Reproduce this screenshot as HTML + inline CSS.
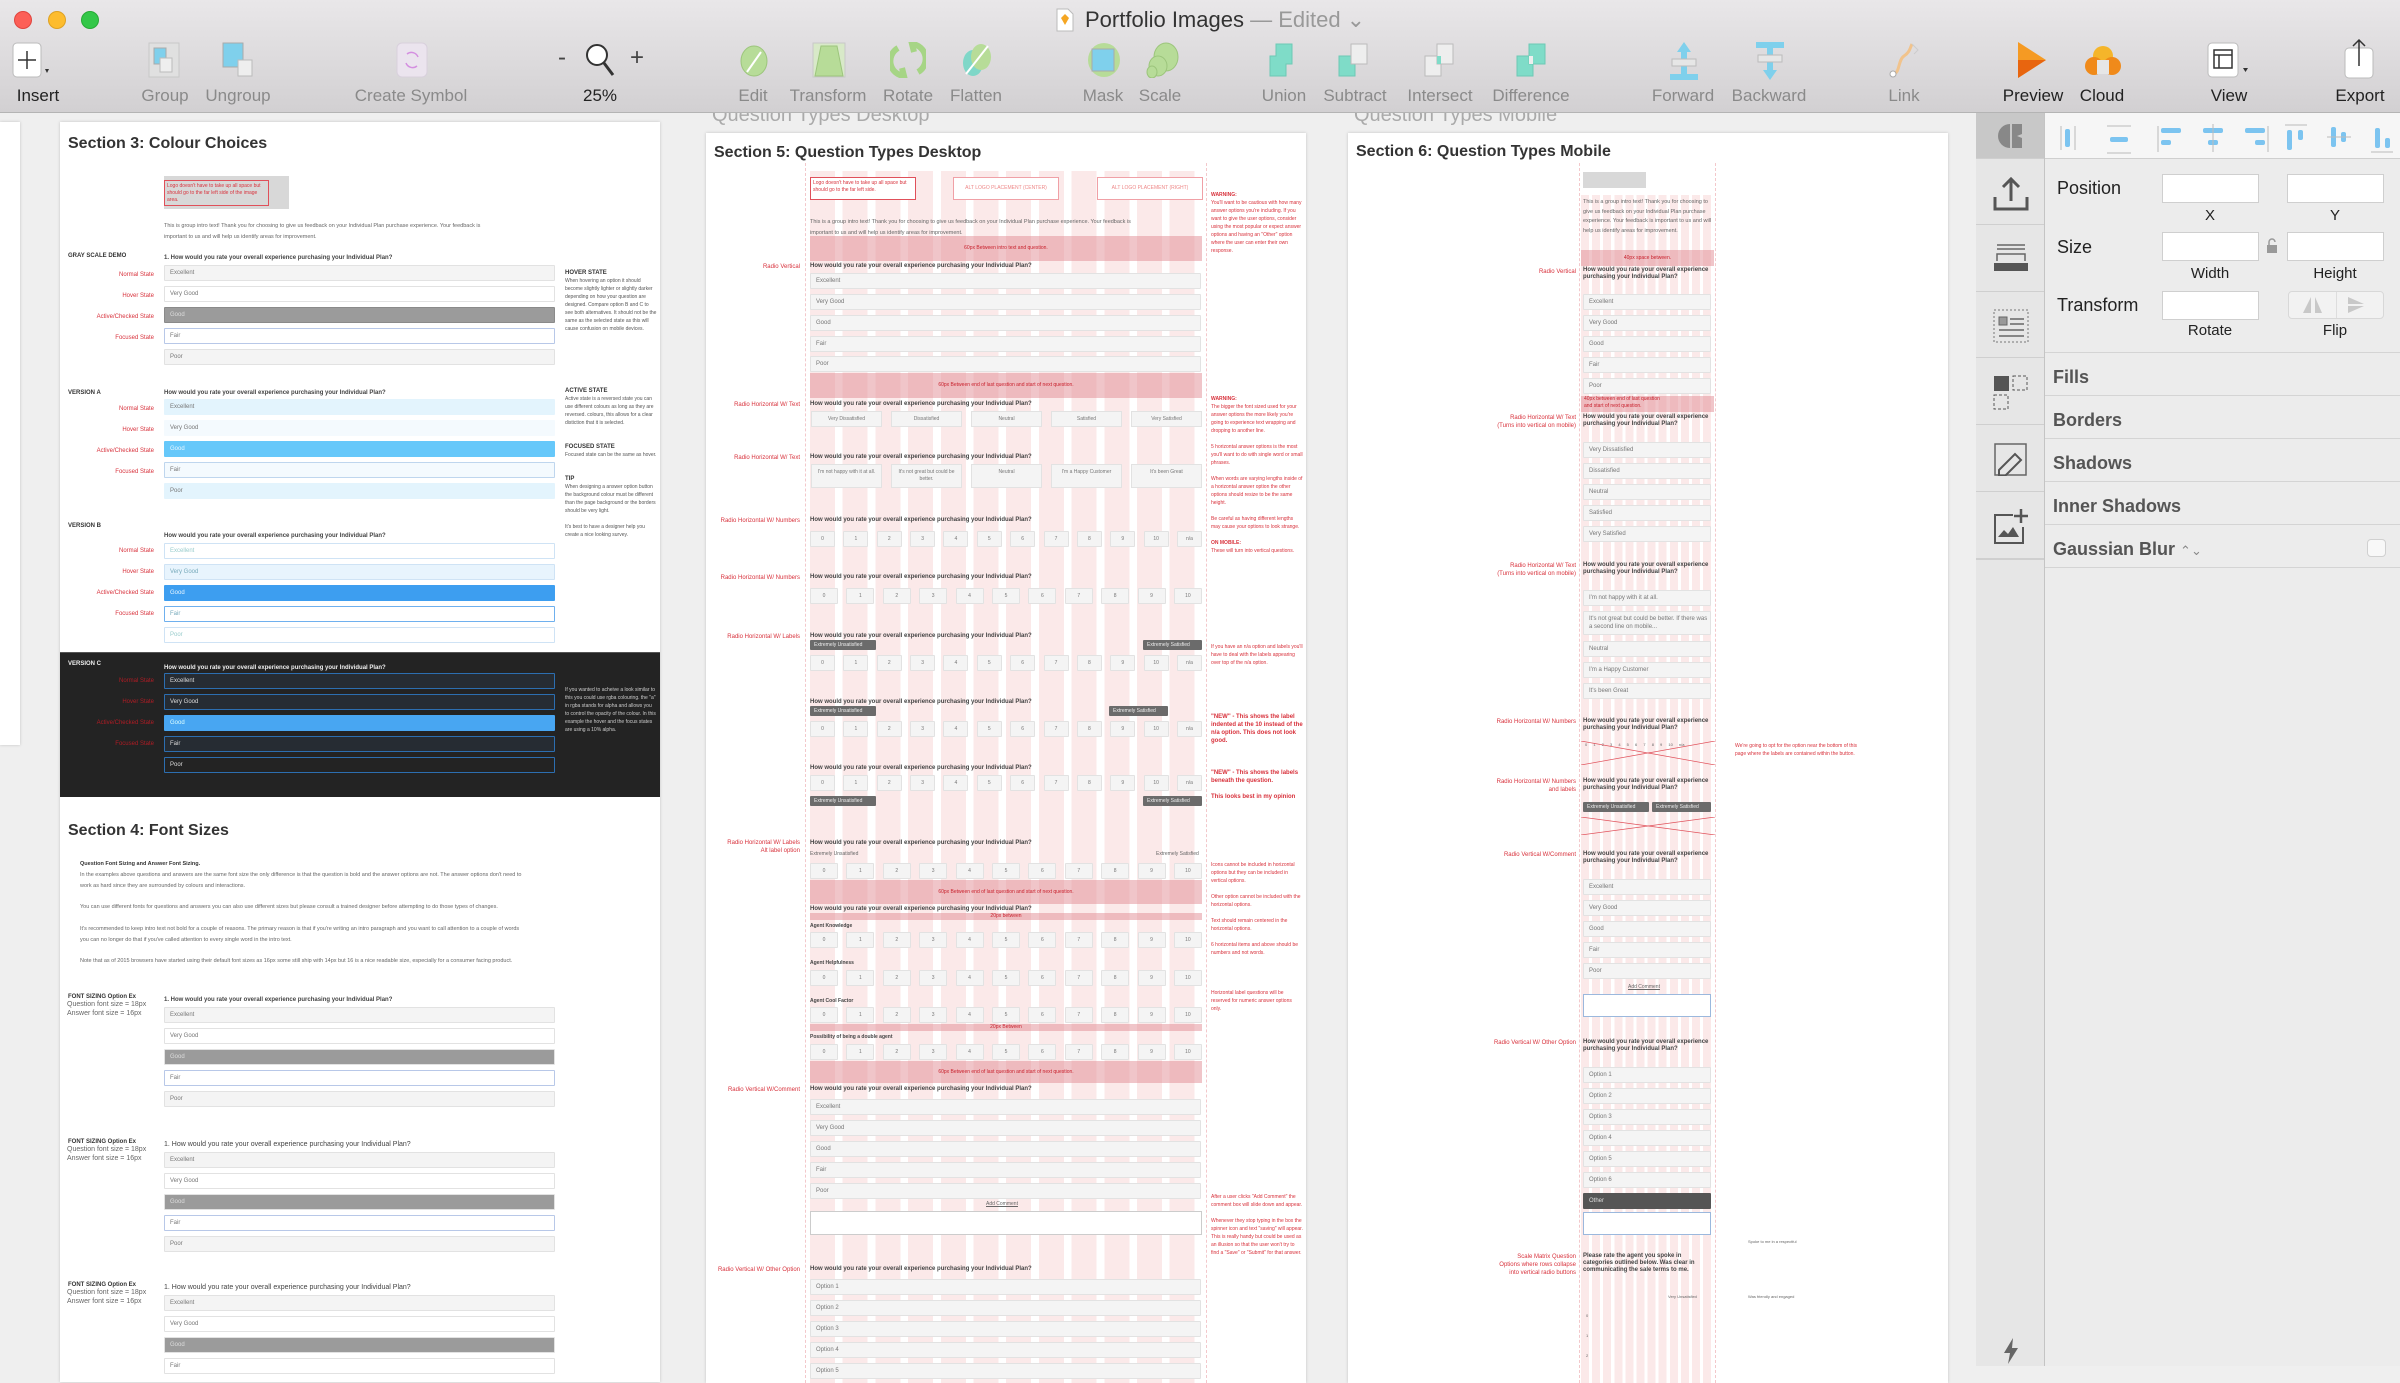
<!DOCTYPE html>
<html><head><meta charset="utf-8">
<style>
*{margin:0;padding:0;box-sizing:border-box}
body{width:2400px;height:1366px;overflow:hidden;background:#efefef;font-family:"Liberation Sans",sans-serif;position:relative}
.tb{position:absolute;left:0;top:0;width:2400px;height:113px;background:linear-gradient(#e9e7e9,#d2d0d2);border-bottom:1px solid #b4b4b4;z-index:10}
.tl{position:absolute;top:11px;width:18px;height:18px;border-radius:50%}
.lab{position:absolute;top:86px;font-size:17px;color:#8a8a8a;transform:translateX(-50%);white-space:nowrap}
.lab.b{color:#222}
.ic{position:absolute;top:42px}
.ab{position:absolute;background:#fff;box-shadow:0 0 3px rgba(0,0,0,.18);overflow:hidden}
.t{position:absolute;left:8px;font-weight:bold;font-size:16px;color:#333;white-space:nowrap}
.o{position:absolute;left:104px;width:391px;height:16px;background:#f4f4f4;border:1px solid #e2e2e2;font-size:6px;line-height:14px;color:#777;padding-left:5px;border-radius:1px}
.q{position:absolute;left:104px;font-weight:bold;font-size:6px;color:#444;white-space:nowrap}
.l{position:absolute;left:0;width:94px;text-align:right;font-size:6px;color:#d8323c;line-height:8px}
.hd{position:absolute;left:8px;font-weight:bold;font-size:6px;color:#333}
.p{position:absolute;font-size:5.5px;color:#666;line-height:11px;white-space:nowrap}
.note{position:absolute;left:505px;width:92px;font-size:5px;line-height:8px;color:#d8323c}
.band{position:absolute;left:104px;width:392px;background:rgba(225,140,148,.5);font-size:5px;color:#c8202c;text-align:center}
.nr{position:absolute;left:104px;width:392px;display:flex;justify-content:space-between}
.nr span{display:block;width:25px;height:16px;background:#f4f4f4;border:1px solid #e2e2e2;font-size:5px;line-height:14px;text-align:center;color:#777;border-radius:1px}
.nr.w span{width:28px}
.dk{position:absolute;height:10px;background:#6b6b6b;color:#eee;font-size:5px;line-height:10px;padding:0 4px;border-radius:1px}
.hb{position:absolute;width:71px;background:#f4f4f4;border:1px solid #e2e2e2;font-size:5px;line-height:7px;text-align:center;color:#777;padding-top:4px}
.m .o{left:235px;width:128px}
.m .q{left:235px;white-space:normal;width:128px;line-height:7px}
.m .l{width:228px}
.m .band{left:233px;width:133px}
.sec{position:absolute;left:2045px;width:355px;height:43px;border-bottom:1px solid #d4d4d4;font-weight:bold;font-size:18px;color:#555;padding:14px 0 0 8px}
.in{position:absolute;height:29px;background:#fff;border:1px solid #cfcfcf}
.il{position:absolute;font-size:15px;color:#222;transform:translateX(-50%)}
.side{position:absolute;left:1976px;width:68px;border-bottom:1px solid #cfcfcf}
</style></head><body>

<!-- toolbar -->
<div class="tb">
 <div class="tl" style="left:14px;background:#fc5f57;border:1px solid #e0443e"></div>
 <div class="tl" style="left:48px;background:#fdbc2e;border:1px solid #dea123"></div>
 <div class="tl" style="left:81px;background:#33c748;border:1px solid #27aa35"></div>
 <svg style="position:absolute;left:1056px;top:8px" width="18" height="24"><path d="M1 1h11l5 5v17H1z" fill="#fff" stroke="#bbb"/><path d="M5 10l4-4 4 4-4 7z" fill="#f5a623"/></svg>
 <div style="position:absolute;left:1085px;top:7px;font-size:22px;color:#333;white-space:nowrap">Portfolio Images <span style="color:#999">— Edited ⌄</span></div>

 <svg class="ic" style="left:12px" width="40" height="36"><rect x="1" y="1" width="28" height="34" rx="4" fill="#fff" stroke="#bbb"/><path d="M15 9v18M6 18h18" stroke="#333" stroke-width="1.5"/><path d="M33 27l4 0-2 4z" fill="#333"/></svg>
 <svg class="ic" style="left:148px" width="34" height="36"><rect x="1" y="1" width="30" height="34" fill="#e0e0e0" stroke="#c8c8c8"/><rect x="6" y="6" width="12" height="16" fill="#7fd0ec" stroke="#aaa"/><rect x="12" y="16" width="12" height="14" fill="#eee" stroke="#bbb"/></svg>
 <svg class="ic" style="left:220px" width="40" height="36"><rect x="3" y="1" width="20" height="24" fill="#7fd0ec" stroke="#aaa"/><rect x="18" y="18" width="14" height="16" fill="#eee" stroke="#bbb"/></svg>
 <svg class="ic" style="left:396px" width="32" height="36"><rect x="1" y="1" width="30" height="34" rx="5" fill="#ebe4ee" stroke="#d8d0dc"/><path d="M11 12a7 7 0 0 1 11 3M21 24a7 7 0 0 1-11-3" stroke="#d48fe0" fill="none" stroke-width="1.5"/></svg>
 <div style="position:absolute;left:558px;top:44px;font-size:24px;color:#444">-</div>
 <svg class="ic" style="left:584px" width="32" height="36"><circle cx="13" cy="13" r="10" fill="#fff" stroke="#333" stroke-width="2"/><path d="M20 21l9 12" stroke="#333" stroke-width="3"/></svg>
 <div style="position:absolute;left:630px;top:44px;font-size:24px;color:#444">+</div>
 <svg class="ic" style="left:738px" width="32" height="36"><ellipse cx="16" cy="19" rx="13" ry="15" fill="#b7dc98" stroke="#9cc57c"/><path d="M9 30l14-20" stroke="#fff" stroke-width="2"/></svg>
 <svg class="ic" style="left:812px" width="34" height="36"><rect x="1" y="1" width="32" height="34" fill="#d8e9c8" stroke="#c8c8c8"/><path d="M9 4h16l6 30H3z" fill="#b7dc98" stroke="#9cc57c"/></svg>
 <svg class="ic" style="left:890px" width="36" height="36"><path d="M8 6a15 15 0 0 0 6 28l-2-8M28 30a15 15 0 0 0-6-28l2 8" stroke="#a6d585" stroke-width="6" fill="none"/></svg>
 <svg class="ic" style="left:960px" width="34" height="36"><ellipse cx="13" cy="21" rx="10" ry="13" fill="#7fd7c8"/><ellipse cx="21" cy="15" rx="10" ry="13" fill="#b7dc98"/><path d="M6 32l22-28" stroke="#fff" stroke-width="2"/></svg>
 <svg class="ic" style="left:1086px" width="36" height="36"><ellipse cx="18" cy="18" rx="16" ry="17" fill="#b7dc98"/><rect x="6" y="7" width="22" height="22" fill="#7fd0ec" stroke="#aaa"/></svg>
 <svg class="ic" style="left:1144px" width="36" height="36"><ellipse cx="22" cy="15" rx="12" ry="14" fill="#b7dc98" stroke="#9cc57c"/><ellipse cx="14" cy="24" rx="9" ry="10" fill="#b7dc98" stroke="#9cc57c"/><ellipse cx="8" cy="30" rx="5" ry="6" fill="#b7dc98" stroke="#9cc57c"/></svg>
 <svg class="ic" style="left:1266px" width="36" height="36"><path d="M10 2h16v20H20v12H4V14h6z" fill="#7fdcc8" stroke="#6cc9b5"/></svg>
 <svg class="ic" style="left:1336px" width="36" height="36"><rect x="3" y="14" width="16" height="20" fill="#7fdcc8" stroke="#6cc9b5"/><rect x="15" y="2" width="16" height="20" fill="#eee" stroke="#bbb"/></svg>
 <svg class="ic" style="left:1422px" width="36" height="36"><rect x="3" y="14" width="16" height="20" fill="#eee" stroke="#bbb"/><rect x="15" y="2" width="16" height="20" fill="#eee" stroke="#bbb"/><rect x="15" y="14" width="4" height="8" fill="#7fdcc8"/></svg>
 <svg class="ic" style="left:1514px" width="36" height="36"><rect x="3" y="14" width="16" height="20" fill="#7fdcc8" stroke="#6cc9b5"/><rect x="15" y="2" width="16" height="20" fill="#7fdcc8" stroke="#6cc9b5"/><rect x="15" y="14" width="4" height="8" fill="#eee"/></svg>
 <svg class="ic" style="left:1666px" width="36" height="38"><path d="M18 0l7 10h-4v22h11v6H4v-6h11V10h-4z" fill="#7fd0ec"/><rect x="6" y="17" width="24" height="7" fill="#e6e6e6" stroke="#bbb"/></svg>
 <svg class="ic" style="left:1752px" width="36" height="38"><path d="M4 0h28v6H21v22h4l-7 10-7-10h4V6H4z" fill="#7fd0ec"/><rect x="6" y="13" width="24" height="7" fill="#e6e6e6" stroke="#bbb"/></svg>
 <svg class="ic" style="left:1888px" width="34" height="36"><path d="M6 32c6-2 4-14 10-18s6-8 8-12" stroke="#f1c38c" stroke-width="3" fill="none"/><circle cx="5" cy="32" r="3" fill="#fff" stroke="#aaa"/><path d="M24 2l6 6-4 4" stroke="#ccc" fill="none"/></svg>
 <svg class="ic" style="left:2016px" width="34" height="38"><path d="M2 0l28 18L2 36z" fill="#f59a23"/><path d="M2 18l28 0L2 36z" fill="#e8650f"/></svg>
 <svg class="ic" style="left:2084px" width="38" height="36"><circle cx="19" cy="14" r="10" fill="#f5b52a"/><circle cx="10" cy="24" r="9" fill="#f08a1a"/><circle cx="28" cy="24" r="9" fill="#f08a1a"/><rect x="13" y="18" width="12" height="14" fill="#e6e6e6"/></svg>
 <svg class="ic" style="left:2207px" width="44" height="36"><rect x="1" y="1" width="30" height="34" rx="4" fill="#fff" stroke="#bbb"/><rect x="7" y="8" width="18" height="18" fill="none" stroke="#333" stroke-width="1.5"/><path d="M7 13h18M12 13v13" stroke="#333" stroke-width="1.5"/><path d="M36 26h5l-2.5 4z" fill="#333"/></svg>
 <svg class="ic" style="left:2344px;top:38px" width="32" height="42"><rect x="1" y="10" width="28" height="30" rx="4" fill="#fff" stroke="#bbb"/><path d="M15 2v26M9 8l6-6 6 6" stroke="#333" stroke-width="1.5" fill="none"/></svg>

 <div class="lab b" style="left:38px">Insert</div>
 <div class="lab" style="left:165px">Group</div>
 <div class="lab" style="left:238px">Ungroup</div>
 <div class="lab" style="left:411px">Create Symbol</div>
 <div class="lab b" style="left:600px">25%</div>
 <div class="lab" style="left:753px">Edit</div>
 <div class="lab" style="left:828px">Transform</div>
 <div class="lab" style="left:908px">Rotate</div>
 <div class="lab" style="left:976px">Flatten</div>
 <div class="lab" style="left:1103px">Mask</div>
 <div class="lab" style="left:1160px">Scale</div>
 <div class="lab" style="left:1284px">Union</div>
 <div class="lab" style="left:1355px">Subtract</div>
 <div class="lab" style="left:1440px">Intersect</div>
 <div class="lab" style="left:1531px">Difference</div>
 <div class="lab" style="left:1683px">Forward</div>
 <div class="lab" style="left:1769px">Backward</div>
 <div class="lab" style="left:1904px">Link</div>
 <div class="lab b" style="left:2033px">Preview</div>
 <div class="lab b" style="left:2102px">Cloud</div>
 <div class="lab b" style="left:2229px">View</div>
 <div class="lab b" style="left:2360px">Export</div>
</div>

<!-- artboard labels -->
<div style="position:absolute;left:712px;top:104px;font-size:20px;color:#aaa">Question Types Desktop</div>
<div style="position:absolute;left:1354px;top:104px;font-size:20px;color:#aaa">Question Types Mobile</div>

<!-- tiny left artboard -->
<div class="ab" style="left:0;top:122px;width:20px;height:623px"></div>

<!-- Section 3 -->
<div class="ab" style="left:60px;top:122px;width:600px;height:1260px">
 <div class="t" style="top:13px">Section 3: Colour Choices</div>
 <div style="position:absolute;left:104px;top:54px;width:125px;height:33px;background:#d8d8d8"></div>
 <div style="position:absolute;left:104px;top:58px;width:105px;height:26px;border:1px solid #e0505a;font-size:5px;color:#d8323c;padding:2px;line-height:7px">Logo doesn't have to take up all space but should go to the far left side of the image area.</div>
 <div class="p" style="left:104px;top:99px">This is group intro text! Thank you for choosing to give us feedback on your Individual Plan purchase experience. Your feedback is<br>important to us and will help us identify areas for improvement.</div>
 <div class="hd" style="top:131px">GRAY SCALE DEMO</div>
 <div class="q" style="top:133px">1. How would you rate your overall experience purchasing your Individual Plan?</div>
 <div class="l" style="top:149px">Normal State</div><div class="l" style="top:170px">Hover State</div><div class="l" style="top:191px">Active/Checked State</div><div class="l" style="top:212px">Focused State</div>
 <div class="o" style="top:143px">Excellent</div>
 <div class="o" style="top:164px;background:#fff">Very Good</div>
 <div class="o" style="top:185px;background:#9b9b9b;border-color:#8a8a8a;color:#ddd">Good</div>
 <div class="o" style="top:206px;background:#fff;border-color:#b8c8e8">Fair</div>
 <div class="o" style="top:227px">Poor</div>
 <div class="note" style="top:147px;color:#555"><b style="color:#333;font-size:6px">HOVER STATE</b><br>When hovering an option it should become slightly lighter or slightly darker depending on how your question are designed. Compare option B and C to see both alternatives. It should not be the same as the selected state as this will cause confusion on mobile devices.</div>

 <div class="hd" style="top:268px">VERSION A</div>
 <div class="q" style="top:268px">How would you rate your overall experience purchasing your Individual Plan?</div>
 <div class="l" style="top:283px">Normal State</div><div class="l" style="top:304px">Hover State</div><div class="l" style="top:325px">Active/Checked State</div><div class="l" style="top:346px">Focused State</div>
 <div class="o" style="top:277px;background:#e3f4fd;border-color:#e3f4fd">Excellent</div>
 <div class="o" style="top:298px;background:#f4fafe;border-color:#f4fafe">Very Good</div>
 <div class="o" style="top:319px;background:#66c8fa;border-color:#66c8fa;color:#e8f6ff">Good</div>
 <div class="o" style="top:340px;background:#f4fafe;border-color:#bfd6ee">Fair</div>
 <div class="o" style="top:361px;background:#e3f4fd;border-color:#e3f4fd">Poor</div>
 <div class="note" style="top:265px;color:#555"><b style="color:#333;font-size:6px">ACTIVE STATE</b><br>Active state is a reversed state you can use different colours as long as they are reversed. colours, this allows for a clear distiction that it is selected.<br><br><br><b style="color:#333;font-size:6px">FOCUSED STATE</b><br>Focused state can be the same as hover.<br><br><br><b style="color:#333;font-size:6px">TIP</b><br>When designing a answer option button the background colour must be different than the page background or the borders should be very light.<br><br>It's best to have a designer help you create a nice looking survey.</div>

 <div class="hd" style="top:401px">VERSION B</div>
 <div class="q" style="top:411px">How would you rate your overall experience purchasing your Individual Plan?</div>
 <div class="l" style="top:425px">Normal State</div><div class="l" style="top:446px">Hover State</div><div class="l" style="top:467px">Active/Checked State</div><div class="l" style="top:488px">Focused State</div>
 <div class="o" style="top:421px;background:#fff;border-color:#cfe3f5;color:#9cc">Excellent</div>
 <div class="o" style="top:442px;background:#e8f4fd;border-color:#cfe3f5;color:#7ab">Very Good</div>
 <div class="o" style="top:463px;background:#3d9ef0;border-color:#3d9ef0;color:#e8f6ff">Good</div>
 <div class="o" style="top:484px;background:#fff;border-color:#6fb0ee;color:#7ab">Fair</div>
 <div class="o" style="top:505px;background:#fff;border-color:#cfe3f5;color:#9cc">Poor</div>

 <div style="position:absolute;left:0;top:530px;width:600px;height:145px;background:#232323;border-top:1px solid #555"></div>
 <div class="hd" style="top:539px;color:#eee">VERSION C</div>
 <div class="q" style="top:543px;color:#eee">How would you rate your overall experience purchasing your Individual Plan?</div>
 <div class="l" style="top:555px;color:#b01c24">Normal State</div><div class="l" style="top:576px;color:#b01c24">Hover State</div><div class="l" style="top:597px;color:#b01c24">Active/Checked State</div><div class="l" style="top:618px;color:#b01c24">Focused State</div>
 <div class="o" style="top:551px;background:#262c33;border-color:#2c6eb0;color:#ddd">Excellent</div>
 <div class="o" style="top:572px;background:#262c33;border-color:#2c6eb0;color:#ddd">Very Good</div>
 <div class="o" style="top:593px;background:#48a6f2;border-color:#48a6f2;color:#dff">Good</div>
 <div class="o" style="top:614px;background:#262c33;border-color:#2c6eb0;color:#ddd">Fair</div>
 <div class="o" style="top:635px;background:#232323;border-color:#2c6eb0;color:#ddd">Poor</div>
 <div class="note" style="top:564px;color:#ccc">If you wanted to acheive a look similar to this you could use rgba colouring. the "a" in rgba stands for alpha and allows you to control the opacity of the colour. In this example the hover and the focus states are using a 10% alpha.</div>

 <div class="t" style="top:700px">Section 4: Font Sizes</div>
 <div class="p" style="left:20px;top:737px;color:#333;font-weight:bold">Question Font Sizing and Answer Font Sizing.</div>
 <div class="p" style="left:20px;top:748px">In the examples above questions and answers are the same font size the only difference is that the question is bold and the answer options are not. The answer options don't need to<br>work as hard since they are surrounded by colours and interactions.</div>
 <div class="p" style="left:20px;top:780px">You can use different fonts for questions and answers you can also use different sizes but please consult a trained designer before attempting to do those types of changes.</div>
 <div class="p" style="left:20px;top:802px">It's recommended to keep intro text not bold for a couple of reasons. The primary reason is that if you're writing an intro paragraph and you want to call attention to a couple of words<br>you can no longer do that if you've called attention to every single word in the intro text.</div>
 <div class="p" style="left:20px;top:834px">Note that as of 2015 browsers have started using their default font sizes as 16px some still ship with 14px but 16 is a nice readable size, especially for a consumer facing product.</div>

 <div class="hd" style="top:872px">FONT SIZING Option Ex</div>
 <div class="p" style="left:7px;top:878px;font-size:7px;line-height:9px">Question font size = 18px<br>Answer font size = 16px</div>
 <div class="q" style="top:875px">1. How would you rate your overall experience purchasing your Individual Plan?</div>
 <div class="o" style="top:885px">Excellent</div><div class="o" style="top:906px;background:#fff">Very Good</div><div class="o" style="top:927px;background:#9b9b9b;color:#ddd">Good</div><div class="o" style="top:948px;background:#fff;border-color:#b8c8e8">Fair</div><div class="o" style="top:969px">Poor</div>

 <div class="hd" style="top:1017px">FONT SIZING Option Ex</div>
 <div class="p" style="left:7px;top:1023px;font-size:7px;line-height:9px">Question font size = 18px<br>Answer font size = 16px</div>
 <div class="q" style="top:1019px;font-weight:normal;font-size:7px">1. How would you rate your overall experience purchasing your Individual Plan?</div>
 <div class="o" style="top:1030px">Excellent</div><div class="o" style="top:1051px;background:#fff">Very Good</div><div class="o" style="top:1072px;background:#9b9b9b;color:#ddd">Good</div><div class="o" style="top:1093px;background:#fff;border-color:#b8c8e8">Fair</div><div class="o" style="top:1114px">Poor</div>

 <div class="hd" style="top:1160px">FONT SIZING Option Ex</div>
 <div class="p" style="left:7px;top:1166px;font-size:7px;line-height:9px">Question font size = 18px<br>Answer font size = 16px</div>
 <div class="q" style="top:1162px;font-weight:normal;font-size:7px">1. How would you rate your overall experience purchasing your Individual Plan?</div>
 <div class="o" style="top:1173px">Excellent</div><div class="o" style="top:1194px;background:#fff">Very Good</div><div class="o" style="top:1215px;background:#9b9b9b;color:#ddd">Good</div><div class="o" style="top:1236px;background:#fff">Fair</div>
</div>

<!-- Section 5 -->
<div class="ab" style="left:706px;top:133px;width:600px;height:1250px">
 <div style="position:absolute;left:104px;top:38px;width:392px;height:1220px;background:repeating-linear-gradient(90deg,#fbe9e9 0 25px,#fff 25px 32.7px)"></div>
 <div style="position:absolute;left:99px;top:30px;height:1220px;border-left:1px dashed #f3c8cb"></div>
 <div style="position:absolute;left:500px;top:30px;height:1220px;border-left:1px dashed #f3c8cb"></div>
 <div class="t" style="top:11px">Section 5: Question Types Desktop</div>
 <div style="position:absolute;left:104px;top:44px;width:106px;height:23px;border:1px solid #e0505a;background:#fff;font-size:5px;color:#d8323c;padding:2px;line-height:7px">Logo doesn't have to take up all space but should go to the far left side.</div>
 <div style="position:absolute;left:247px;top:44px;width:106px;height:23px;border:1px solid #f0a0a6;background:#fff;font-size:5px;color:#e88;text-align:center;line-height:21px">ALT LOGO PLACEMENT (CENTER)</div>
 <div style="position:absolute;left:391px;top:44px;width:106px;height:23px;border:1px solid #f0a0a6;background:#fff;font-size:5px;color:#e88;text-align:center;line-height:21px">ALT LOGO PLACEMENT (RIGHT)</div>
 <div class="p" style="left:104px;top:84px">This is a group intro text! Thank you for choosing to give us feedback on your Individual Plan purchase experience. Your feedback is<br>important to us and will help us identify areas for improvement.</div>
 <div class="band" style="top:103px;height:25px;line-height:25px">60px Between intro text and question.</div>
 <div class="note" style="top:58px"><b>WARNING:</b><br>You'll want to be cautious with how many answer options you're including. If you want to give the user options, consider using the most popular or expect answer options and having an "Other" option where the user can enter their own response.</div>

 <div class="l" style="top:130px">Radio Vertical</div>
 <div class="q" style="top:130px">How would you rate your overall experience purchasing your Individual Plan?</div>
 <div class="o" style="top:140px">Excellent</div><div class="o" style="top:161px">Very Good</div><div class="o" style="top:182px">Good</div><div class="o" style="top:203px">Fair</div><div class="o" style="top:223px">Poor</div>
 <div class="band" style="top:240px;height:25px;line-height:25px">60px Between end of last question and start of next question.</div>

 <div class="l" style="top:268px">Radio Horizontal W/ Text</div>
 <div class="q" style="top:268px">How would you rate your overall experience purchasing your Individual Plan?</div>
 <div class="hb" style="left:105px;top:278px;height:16px">Very Dissatisfied</div><div class="hb" style="left:185px;top:278px;height:16px">Dissatisfied</div><div class="hb" style="left:265px;top:278px;height:16px">Neutral</div><div class="hb" style="left:345px;top:278px;height:16px">Satisfied</div><div class="hb" style="left:425px;top:278px;height:16px">Very Satisfied</div>
 <div class="note" style="top:262px"><b>WARNING:</b><br>The bigger the font sized used for your answer options the more likely you're going to experience text wrapping and dropping to another line.<br><br>5 horizontal answer options is the most you'll want to do with single word or small phrases.<br><br>When words are varying lengths inside of a horizontal answer option the other options should resize to be the same height.<br><br>Be careful as having different lengths may cause your options to look strange.<br><br><b>ON MOBILE:</b><br>These will turn into vertical questions.</div>

 <div class="l" style="top:321px">Radio Horizontal W/ Text</div>
 <div class="q" style="top:321px">How would you rate your overall experience purchasing your Individual Plan?</div>
 <div class="hb" style="left:105px;top:331px;height:24px">I'm not happy with it at all.</div><div class="hb" style="left:185px;top:331px;height:24px">It's not great but could be better.</div><div class="hb" style="left:265px;top:331px;height:24px">Neutral</div><div class="hb" style="left:345px;top:331px;height:24px">I'm a Happy Customer</div><div class="hb" style="left:425px;top:331px;height:24px">It's been Great</div>

 <div class="l" style="top:384px">Radio Horizontal W/ Numbers</div>
 <div class="q" style="top:384px">How would you rate your overall experience purchasing your Individual Plan?</div>
 <div class="nr" style="top:398px"><span>0</span><span>1</span><span>2</span><span>3</span><span>4</span><span>5</span><span>6</span><span>7</span><span>8</span><span>9</span><span>10</span><span>n/a</span></div>

 <div class="l" style="top:441px">Radio Horizontal W/ Numbers</div>
 <div class="q" style="top:441px">How would you rate your overall experience purchasing your Individual Plan?</div>
 <div class="nr w" style="top:455px"><span>0</span><span>1</span><span>2</span><span>3</span><span>4</span><span>5</span><span>6</span><span>7</span><span>8</span><span>9</span><span>10</span></div>

 <div class="l" style="top:500px">Radio Horizontal W/ Labels</div>
 <div class="q" style="top:500px">How would you rate your overall experience purchasing your Individual Plan?</div>
 <div class="dk" style="left:104px;top:507px;width:66px">Extremely Unsatisfied</div><div class="dk" style="left:437px;top:507px;width:59px">Extremely Satisfied</div>
 <div class="nr" style="top:522px"><span>0</span><span>1</span><span>2</span><span>3</span><span>4</span><span>5</span><span>6</span><span>7</span><span>8</span><span>9</span><span>10</span><span>n/a</span></div>
 <div class="note" style="top:510px">If you have an n/a option and labels you'll have to deal with the labels appearing over top of the n/a option.</div>

 <div class="q" style="top:566px">How would you rate your overall experience purchasing your Individual Plan?</div>
 <div class="dk" style="left:104px;top:573px;width:66px">Extremely Unsatisfied</div><div class="dk" style="left:403px;top:573px;width:59px">Extremely Satisfied</div>
 <div class="nr" style="top:588px"><span>0</span><span>1</span><span>2</span><span>3</span><span>4</span><span>5</span><span>6</span><span>7</span><span>8</span><span>9</span><span>10</span><span>n/a</span></div>
 <div class="note" style="top:580px;font-weight:bold;font-size:6px">"NEW" - This shows the label indented at the 10 instead of the n/a option. This does not look good.</div>

 <div class="q" style="top:632px">How would you rate your overall experience purchasing your Individual Plan?</div>
 <div class="nr" style="top:642px"><span>0</span><span>1</span><span>2</span><span>3</span><span>4</span><span>5</span><span>6</span><span>7</span><span>8</span><span>9</span><span>10</span><span>n/a</span></div>
 <div class="dk" style="left:104px;top:663px;width:66px">Extremely Unsatisfied</div><div class="dk" style="left:437px;top:663px;width:59px">Extremely Satisfied</div>
 <div class="note" style="top:636px;font-weight:bold;font-size:6px">"NEW" - This shows the labels beneath the question.<br><br>This looks best in my opinion</div>

 <div class="l" style="top:706px">Radio Horizontal W/ Labels<br>Alt label option</div>
 <div class="q" style="top:707px">How would you rate your overall experience purchasing your Individual Plan?</div>
 <div class="p" style="left:104px;top:716px;font-size:5px">Extremely Unsatisfied</div><div class="p" style="left:450px;top:716px;font-size:5px">Extremely Satisfied</div>
 <div class="nr w" style="top:730px"><span>0</span><span>1</span><span>2</span><span>3</span><span>4</span><span>5</span><span>6</span><span>7</span><span>8</span><span>9</span><span>10</span></div>
 <div class="band" style="top:747px;height:24px;line-height:24px">60px Between end of last question and start of next question.</div>
 <div class="note" style="top:728px">Icons cannot be included in horizontal options but they can be included in vertical options.<br><br>Other option cannot be included with the horizontal options.<br><br>Text should remain centered in the horizontal options.<br><br>6 horizontal items and above should be numbers and not words.<br><br><br><br><br>Horizontal label questions will be reserved for numeric answer options only.</div>

 <div class="q" style="top:773px">How would you rate your overall experience purchasing your Individual Plan?</div>
 <div class="band" style="top:780px;height:7px;line-height:7px">20px between</div>
 <div class="q" style="top:790px;font-size:5px">Agent Knowledge</div>
 <div class="nr w" style="top:799px"><span>0</span><span>1</span><span>2</span><span>3</span><span>4</span><span>5</span><span>6</span><span>7</span><span>8</span><span>9</span><span>10</span></div>
 <div class="q" style="top:827px;font-size:5px">Agent Helpfulness</div>
 <div class="nr w" style="top:837px"><span>0</span><span>1</span><span>2</span><span>3</span><span>4</span><span>5</span><span>6</span><span>7</span><span>8</span><span>9</span><span>10</span></div>
 <div class="q" style="top:865px;font-size:5px">Agent Cool Factor</div>
 <div class="nr w" style="top:874px"><span>0</span><span>1</span><span>2</span><span>3</span><span>4</span><span>5</span><span>6</span><span>7</span><span>8</span><span>9</span><span>10</span></div>
 <div class="band" style="top:891px;height:7px;line-height:7px">20px Between</div>
 <div class="q" style="top:901px;font-size:5px">Possibility of being a double agent</div>
 <div class="nr w" style="top:911px"><span>0</span><span>1</span><span>2</span><span>3</span><span>4</span><span>5</span><span>6</span><span>7</span><span>8</span><span>9</span><span>10</span></div>
 <div class="band" style="top:928px;height:22px;line-height:22px">60px Between end of last question and start of next question.</div>

 <div class="l" style="top:953px">Radio Vertical W/Comment</div>
 <div class="q" style="top:953px">How would you rate your overall experience purchasing your Individual Plan?</div>
 <div class="o" style="top:966px">Excellent</div><div class="o" style="top:987px">Very Good</div><div class="o" style="top:1008px">Good</div><div class="o" style="top:1029px">Fair</div><div class="o" style="top:1050px">Poor</div>
 <div class="p" style="left:280px;top:1066px;font-size:5px;text-decoration:underline">Add Comment</div>
 <div style="position:absolute;left:104px;top:1078px;width:392px;height:24px;background:#fff;border:1px solid #ccc"></div>
 <div class="note" style="top:1060px">After a user clicks "Add Comment" the comment box will slide down and appear.<br><br>Whenever they stop typing in the box the spinner icon and text "saving" will appear. This is really handy but could be used as an illusion so that the user won't try to find a "Save" or "Submit" for that answer.</div>

 <div class="l" style="top:1133px">Radio Vertical W/ Other Option</div>
 <div class="q" style="top:1133px">How would you rate your overall experience purchasing your Individual Plan?</div>
 <div class="o" style="top:1146px">Option 1</div><div class="o" style="top:1167px">Option 2</div><div class="o" style="top:1188px">Option 3</div><div class="o" style="top:1209px">Option 4</div><div class="o" style="top:1230px">Option 5</div>
</div>

<!-- Section 6 -->
<div class="ab m" style="left:1348px;top:133px;width:600px;height:1250px">
 <div style="position:absolute;left:233px;top:62px;width:133px;height:1200px;background:repeating-linear-gradient(90deg,#fbe9e9 0 8px,#fff 8px 11.1px)"></div>
 <div style="position:absolute;left:231px;top:30px;height:1220px;border-left:1px dashed #f3c8cb"></div>
 <div style="position:absolute;left:367px;top:30px;height:1220px;border-left:1px dashed #f3c8cb"></div>
 <div class="t" style="top:10px">Section 6: Question Types Mobile</div>
 <div style="position:absolute;left:235px;top:39px;width:63px;height:16px;background:#d8d8d8"></div>
 <div class="p" style="left:235px;top:65px;line-height:9.5px;white-space:normal;width:130px">This is a group intro text! Thank you for choosing to give us feedback on your Individual Plan purchase experience. Your feedback is important to us and will help us identify areas for improvement.</div>
 <div class="band" style="top:117px;height:16px;line-height:16px">40px space between.</div>
 <div class="l" style="top:135px">Radio Vertical</div>
 <div class="q" style="top:134px">How would you rate your overall experience purchasing your Individual Plan?</div>
 <div class="o" style="top:161px">Excellent</div><div class="o" style="top:182px">Very Good</div><div class="o" style="top:203px">Good</div><div class="o" style="top:224px">Fair</div><div class="o" style="top:245px">Poor</div>
 <div class="band" style="top:263px;height:16px;line-height:7px;text-align:left;padding-left:3px">40px between end of last question<br>and start of next question.</div>
 <div class="l" style="top:281px">Radio Horizontal W/ Text<br>(Turns into vertical on mobile)</div>
 <div class="q" style="top:281px">How would you rate your overall experience purchasing your Individual Plan?</div>
 <div class="o" style="top:309px">Very Dissatisfied</div><div class="o" style="top:330px">Dissatisfied</div><div class="o" style="top:351px">Neutral</div><div class="o" style="top:372px">Satisfied</div><div class="o" style="top:393px">Very Satisfied</div>
 <div class="l" style="top:429px">Radio Horizontal W/ Text<br>(Turns into vertical on mobile)</div>
 <div class="q" style="top:429px">How would you rate your overall experience purchasing your Individual Plan?</div>
 <div class="o" style="top:457px">I'm not happy with it at all.</div><div class="o" style="top:478px;height:24px;line-height:8px;padding-top:3px">It's not great but could be better. If there was a second line on mobile...</div><div class="o" style="top:508px">Neutral</div><div class="o" style="top:529px">I'm a Happy Customer</div><div class="o" style="top:550px">It's been Great</div>
 <div class="l" style="top:585px">Radio Horizontal W/ Numbers</div>
 <div class="q" style="top:585px">How would you rate your overall experience purchasing your Individual Plan?</div>
 <div class="p" style="left:237px;top:606px;font-size:4px;word-spacing:5px">0 1 2 3 4 5 6 7 8 9 10 n/a</div>
 <svg style="position:absolute;left:233px;top:608px" width="134" height="24"><path d="M0 0L134 24M0 24L134 0" stroke="#e0505a" stroke-width=".7"/></svg>
 <div class="note" style="left:387px;top:609px;width:130px">We're going to opt for the option near the bottom of this page where the labels are contained within the button.</div>
 <div class="l" style="top:645px">Radio Horizontal W/ Numbers<br>and labels</div>
 <div class="q" style="top:645px">How would you rate your overall experience purchasing your Individual Plan?</div>
 <div class="dk" style="left:235px;top:669px;width:66px">Extremely Unsatisfied</div><div class="dk" style="left:304px;top:669px;width:59px">Extremely Satisfied</div>
 <svg style="position:absolute;left:233px;top:684px" width="134" height="18"><path d="M0 0L134 18M0 18L134 0" stroke="#e0505a" stroke-width=".7"/></svg>
 <div class="l" style="top:718px">Radio Vertical W/Comment</div>
 <div class="q" style="top:718px">How would you rate your overall experience purchasing your Individual Plan?</div>
 <div class="o" style="top:746px">Excellent</div><div class="o" style="top:767px">Very Good</div><div class="o" style="top:788px">Good</div><div class="o" style="top:809px">Fair</div><div class="o" style="top:830px">Poor</div>
 <div class="p" style="left:280px;top:849px;font-size:5px;text-decoration:underline">Add Comment</div>
 <div style="position:absolute;left:235px;top:861px;width:128px;height:23px;background:#fff;border:1px solid #9bb8dd"></div>
 <div class="l" style="top:906px">Radio Vertical W/ Other Option</div>
 <div class="q" style="top:906px">How would you rate your overall experience purchasing your Individual Plan?</div>
 <div class="o" style="top:934px">Option 1</div><div class="o" style="top:955px">Option 2</div><div class="o" style="top:976px">Option 3</div><div class="o" style="top:997px">Option 4</div><div class="o" style="top:1018px">Option 5</div><div class="o" style="top:1039px">Option 6</div>
 <div class="o" style="top:1060px;background:#555;border-color:#555;color:#ddd">Other</div>
 <div style="position:absolute;left:235px;top:1079px;width:128px;height:23px;background:#fff;border:1px solid #9bb8dd"></div>
 <div class="l" style="top:1120px">Scale Matrix Question<br>Options where rows collapse<br>into vertical radio buttons</div>
 <div class="q" style="top:1120px">Please rate the agent you spoke in categories outlined below. Was clear in communicating the sale terms to me.</div>
 <div class="p" style="left:320px;top:1158px;font-size:4px">Very Unsatisfied</div>
 <div class="p" style="left:400px;top:1103px;font-size:4px">Spoke to me in a respectful</div>
 <div class="p" style="left:400px;top:1158px;font-size:4px">Was friendly and engaged</div>
 <div class="p" style="left:238px;top:1173px;font-size:4px;line-height:20px">0<br>1<br>2</div>
</div>

<!-- right panel -->
<div style="position:absolute;left:1976px;top:113px;width:424px;height:1253px;background:#ececec;border-left:1px solid #c8c8c8"></div>
<div style="position:absolute;left:1976px;top:113px;width:69px;height:1253px;background:#e6e6e6;border-right:1px solid #c4c4c4"></div>
<div class="side" style="top:113px;height:46px;background:#c8c8c8"></div>
<svg style="position:absolute;left:1998px;top:124px" width="24" height="24"><path d="M12 0a12 12 0 0 0 0 24z" fill="#888"/><path d="M14 0h10v10l-5 2 5 2v10H14z" fill="#888"/></svg>
<div class="side" style="top:159px;height:66px"></div>
<svg style="position:absolute;left:1993px;top:177px" width="36" height="34"><path d="M18 2v22M10 10l8-8 8 8M2 20v12h32V20" stroke="#555" stroke-width="3" fill="none"/></svg>
<div class="side" style="top:225px;height:67px"></div>
<svg style="position:absolute;left:1993px;top:244px" width="36" height="32"><path d="M4 1h28M4 5h28" stroke="#666" stroke-width="1.5"/><path d="M4 17V10h28v7" stroke="#666" stroke-width="1.5" fill="none"/><rect x="1" y="19" width="34" height="8" fill="#555"/></svg>
<div class="side" style="top:292px;height:66px"></div>
<svg style="position:absolute;left:1993px;top:309px" width="36" height="34"><rect x="1" y="1" width="34" height="32" fill="none" stroke="#777" stroke-dasharray="2 2"/><rect x="6" y="8" width="8" height="8" fill="#999" stroke="#666"/><path d="M17 10h14M17 15h14M6 21h25M6 27h25" stroke="#666" stroke-width="1.5"/></svg>
<div class="side" style="top:358px;height:67px"></div>
<svg style="position:absolute;left:1993px;top:375px" width="36" height="36"><rect x="1" y="1" width="15" height="15" fill="#555"/><rect x="20" y="1" width="14" height="14" fill="none" stroke="#555" stroke-dasharray="3 2"/><rect x="1" y="20" width="14" height="14" fill="none" stroke="#555" stroke-dasharray="3 2"/></svg>
<div class="side" style="top:425px;height:67px"></div>
<svg style="position:absolute;left:1993px;top:442px" width="36" height="34"><rect x="2" y="2" width="31" height="31" fill="none" stroke="#666" stroke-width="1.5"/><path d="M6 28l16-16 6 6-16 16H6z" fill="none" stroke="#555" stroke-width="2"/></svg>
<div class="side" style="top:492px;height:67px"></div>
<svg style="position:absolute;left:1993px;top:509px" width="36" height="36"><path d="M20 6H2v28h28V18" fill="none" stroke="#555" stroke-width="2"/><path d="M28 0v14M21 7h14" stroke="#555" stroke-width="2.5"/><path d="M5 28l6-7 4 4 5-7 6 10z" fill="#555"/></svg>
<div class="side" style="top:559px;height:1px"></div>
<svg style="position:absolute;left:2003px;top:1338px" width="16" height="26"><path d="M10 0L1 15h6l-2 11 10-16H9z" fill="#666"/></svg>

<div style="position:absolute;left:2045px;top:113px;width:355px;height:46px;background:#f6f6f6;border-bottom:1px solid #cfcfcf"></div>
<svg style="position:absolute;left:2055px;top:124px" width="345" height="30">
 <g fill="#7cc4f0"><rect x="10" y="5" width="5" height="18" rx="2"/><rect x="55" y="13" width="18" height="5" rx="2"/><rect x="106" y="4" width="20" height="5" rx="2"/><rect x="106" y="16" width="10" height="5" rx="2"/><rect x="148" y="4" width="20" height="5" rx="2"/><rect x="153" y="16" width="10" height="5" rx="2"/><rect x="190" y="4" width="20" height="5" rx="2"/><rect x="200" y="16" width="10" height="5" rx="2"/><rect x="232" y="6" width="5" height="20" rx="2"/><rect x="243" y="6" width="5" height="10" rx="2"/><rect x="276" y="3" width="5" height="20" rx="2"/><rect x="286" y="8" width="5" height="10" rx="2"/><rect x="320" y="4" width="5" height="20" rx="2"/><rect x="330" y="14" width="5" height="10" rx="2"/></g>
 <g stroke="#bbb"><path d="M6 2v24M20 2v24M52 2h24M52 29h24M103 2v26M158 0v28M213 2v26M230 1h22M272 13h24M316 28h22"/></g>
</svg>

<div style="position:absolute;left:2057px;top:178px;font-size:18px;color:#222">Position</div>
<div class="in" style="left:2162px;top:174px;width:97px"></div><div class="in" style="left:2287px;top:174px;width:97px"></div>
<div class="il" style="left:2210px;top:207px">X</div><div class="il" style="left:2335px;top:207px">Y</div>
<div style="position:absolute;left:2057px;top:237px;font-size:18px;color:#222">Size</div>
<div class="in" style="left:2162px;top:232px;width:97px"></div><div class="in" style="left:2287px;top:232px;width:97px"></div>
<svg style="position:absolute;left:2266px;top:238px" width="12" height="16"><path d="M3 7V4a3 3 0 0 1 6 0" stroke="#999" fill="none" stroke-width="1.5"/><rect x="1" y="7" width="10" height="8" fill="#999"/></svg>
<div class="il" style="left:2210px;top:265px">Width</div><div class="il" style="left:2335px;top:265px">Height</div>
<div style="position:absolute;left:2057px;top:295px;font-size:18px;color:#222">Transform</div>
<div class="in" style="left:2162px;top:291px;width:97px"></div>
<div style="position:absolute;left:2288px;top:291px;width:96px;height:28px;background:#f2f2f2;border:1px solid #d8d8d8;border-radius:4px"></div>
<div style="position:absolute;left:2336px;top:292px;height:26px;border-left:1px solid #ddd"></div>
<svg style="position:absolute;left:2298px;top:295px" width="80" height="20"><path d="M13 2L5 18h8zM17 2v16h7z" fill="#c8c8c8"/><path d="M50 2l16 7H50zM50 11h16l-16 7z" fill="#c8c8c8"/></svg>
<div class="il" style="left:2210px;top:322px">Rotate</div><div class="il" style="left:2335px;top:322px">Flip</div>
<div style="position:absolute;left:2045px;top:352px;width:355px;border-top:1px solid #d4d4d4"></div>
<div class="sec" style="top:353px">Fills</div>
<div class="sec" style="top:396px">Borders</div>
<div class="sec" style="top:439px">Shadows</div>
<div class="sec" style="top:482px">Inner Shadows</div>
<div class="sec" style="top:525px">Gaussian Blur <span style="font-size:13px;font-weight:normal;color:#888">⌃⌄</span></div>
<div style="position:absolute;left:2367px;top:539px;width:19px;height:18px;background:#f8f8f8;border:1px solid #d0d0d0;border-radius:4px"></div>
</body></html>
